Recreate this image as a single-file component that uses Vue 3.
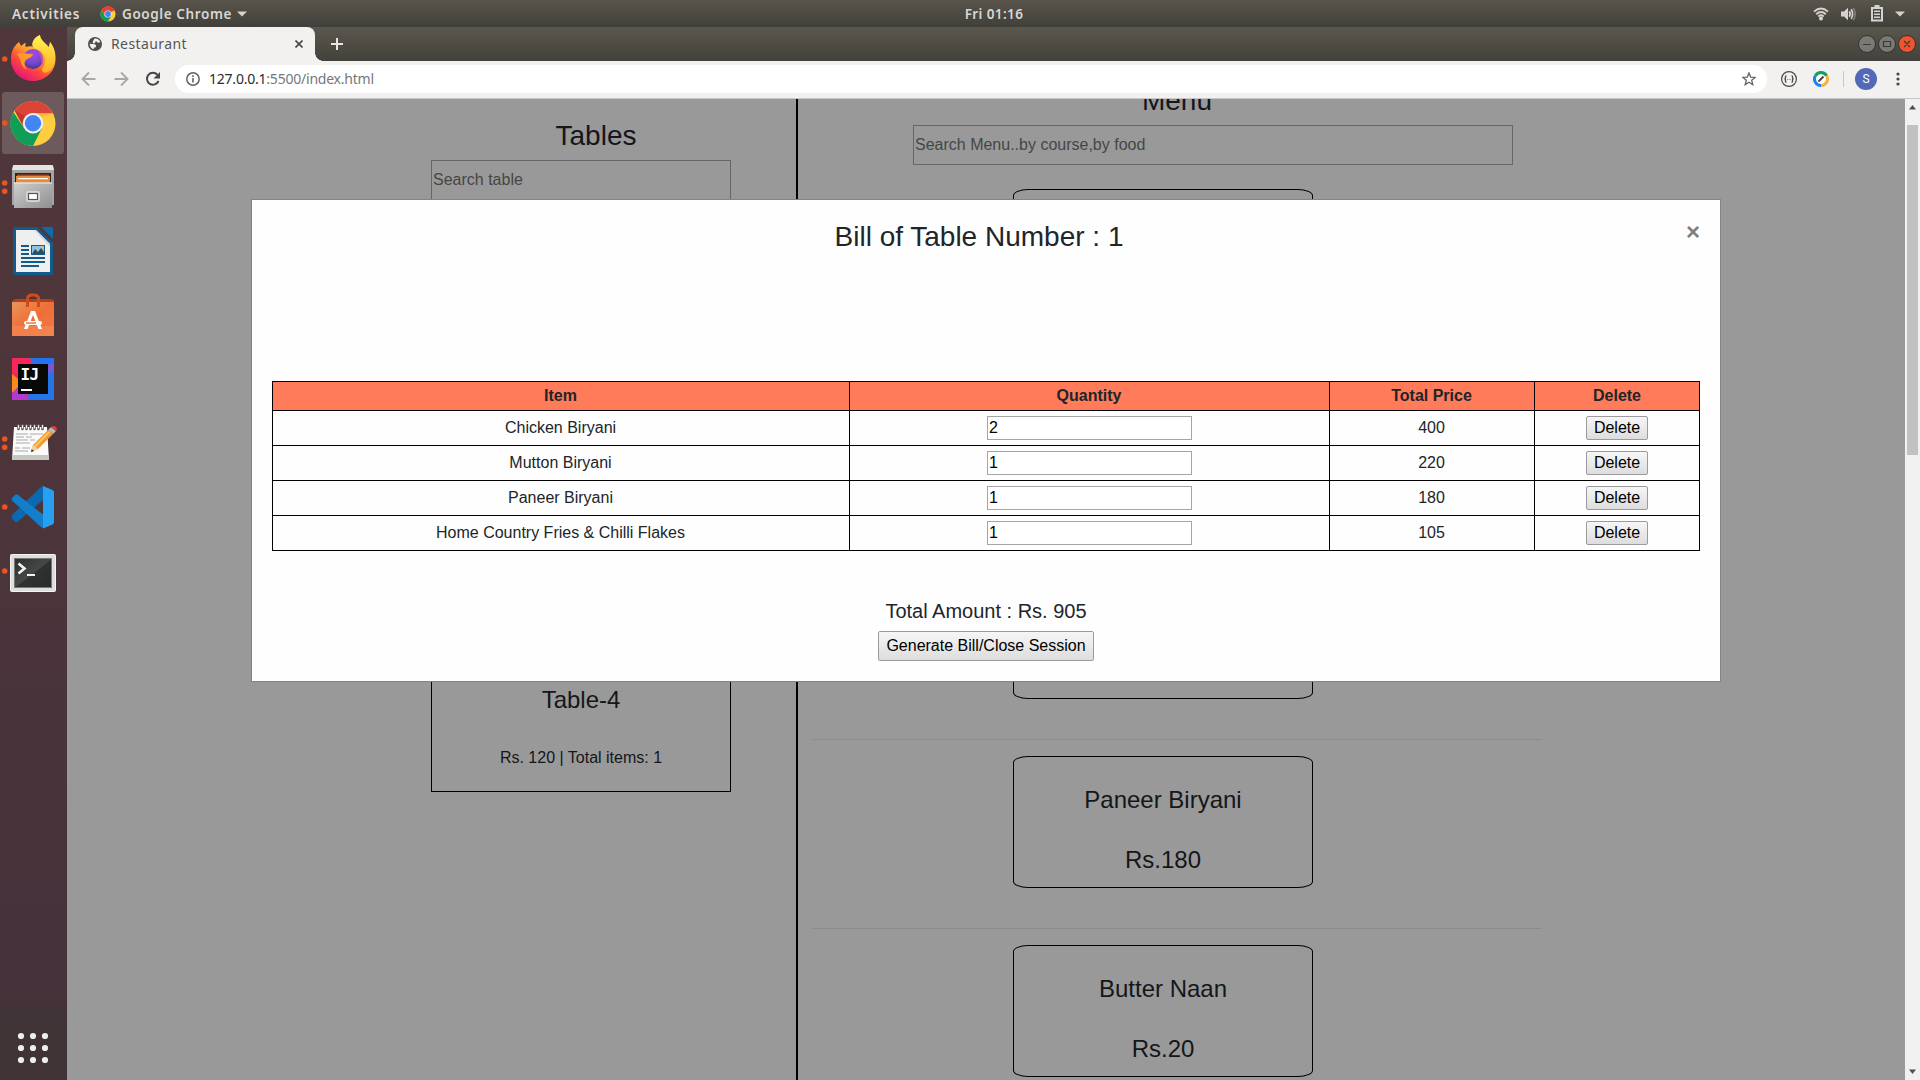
<script setup>
import { ref } from 'vue'

const orders = ref([
  { name: 'Chicken Biryani', qty: 2, price: 400 },
  { name: 'Mutton Biryani', qty: 1, price: 220 },
  { name: 'Paneer Biryani', qty: 1, price: 180 },
  { name: 'Home Country Fries & Chilli Flakes', qty: 1, price: 105 },
])
const menu = [
  { id: 1 },
  { id: 2 },
  { id: 3 },
  { id: 4, name: 'Paneer Biryani', price: 180 },
  { id: 5, name: 'Butter Naan', price: 20 },
]
</script>

<template>
  <div class="desktop">
    <header class="topbar">
      <div class="side">
        <span class="activities">Activities</span>
        <svg class="mini-chrome" width="16" height="16" viewBox="-8 -8 16 16">
          <circle r="7.6" fill="#ffcd40" />
          <path d="M0 0L-6.6-3.8A7.6 7.6 0 0 1 6.6-3.8z" fill="#db4437" />
          <path d="M0-3.8H6.6A7.6 7.6 0 0 0-6.6-3.8L-3.3 1.9z" fill="#db4437" />
          <path d="M-6.6-3.8A7.6 7.6 0 0 0 0 7.6L3.3 1.9L0 0L-3.3 1.9z" fill="#0f9d58" />
          <circle r="3.6" fill="#f1f1f1" /><circle r="2.9" fill="#4285f4" />
        </svg>
        <span class="appname">Google Chrome</span>
        <svg class="caret" width="10" height="6" viewBox="0 0 10 6"><path d="M0 .5H10L5 5.5z" fill="#d5d3cf" /></svg>
      </div>
      <span class="clock">Fri 01:16</span>
      <div class="side tray">
        <svg width="16" height="14" viewBox="0 0 16 14" fill="none" stroke="#d5d3cf" stroke-width="1.9">
          <path d="M1 4.6Q8-1.8 15 4.6M3.2 7.3Q8 2.9 12.8 7.3M5.3 9.4Q8 7.2 10.7 9.4" />
          <circle cx="8" cy="11.5" r="2" fill="#d5d3cf" stroke="none" />
        </svg>
        <svg class="vol" width="16" height="14" viewBox="0 0 16 14" fill="none" stroke="#d5d3cf" stroke-width="1.7">
          <path d="M0 4.5H3L7 .8V13.2L3 9.5H0z" fill="#d5d3cf" stroke="none" />
          <path d="M8.3 4.2Q10 7 8.3 9.8M10.2 2.3Q13 7 10.2 11.7" /><path d="M12.3.8Q16 7 12.3 13.2" stroke="#7c7973" />
        </svg>
        <svg class="bat" width="12" height="17" viewBox="0 0 12 17">
          <path d="M3.5 0h5v2H12V16.500H0V2H3.500z" fill="#d5d3cf" /><path d="M2 4h8v10.500H2z" fill="#4b4943" />
          <path d="M3 5.500h6v1.500H3zM3 8.500h6v1.500H3zM3 11.500h6V13H3z" fill="#d5d3cf" />
        </svg>
        <svg class="caret2" width="10" height="6" viewBox="0 0 10 6"><path d="M0 .5H10L5 5.500z" fill="#d5d3cf" /></svg>
      </div>
    </header>

    <div class="workspace">
      <nav class="dock">
        <div class="app">
          <svg width="67" height="64" viewBox="0 27 67 64">
            <defs>
              <linearGradient id="ff" x1=".85" y1=".1" x2=".3" y2="1"><stop offset="0" stop-color="#fff44f" /><stop offset=".4" stop-color="#ffa42c" /><stop offset=".68" stop-color="#ff4a3a" /><stop offset="1" stop-color="#e5127e" /></linearGradient>
              <radialGradient id="ffb" cx=".5" cy=".25" r=".8"><stop offset="0" stop-color="#a04bf0" /><stop offset=".6" stop-color="#7548c8" /><stop offset="1" stop-color="#39318f" /></radialGradient>
              <linearGradient id="ffy" x1="0" y1="0" x2="0" y2="1"><stop offset="0" stop-color="#fff44f" /><stop offset="1" stop-color="#ffae23" /></linearGradient>
            </defs>
            <circle cx="4.700" cy="59" r="2.800" fill="#e95420" />
            <path d="M11 59C11 51 14 46 19 42L21 46L25.500 42.500V47C29 46 32 46 33 47C31 42 35 37 40 35C40 39 43 41 46 44L49 47L50 42C54 47 56 53 55.500 60C55 72 45 81 33 81S11 72 11 59z" fill="url(#ff)" />
            <path d="M33 47C31 42 35 37 40 35C40 40 45 42 49 49L50 42C55 48 57 60 52 68C48 74 42 74 42 69C48 62 46 53 39 50z" fill="url(#ffy)" />
            <circle cx="33" cy="59" r="10" fill="url(#ffb)" />
            <path d="M17 54C20 52 24 54 33 54C32 58 28 58 26 60C24 62 24 66 27 70C20 67 22 60 17 54z" fill="#ff9a2e" />
            <path d="M37 50C44 52 45 60 42 67C41 58 40 54 37 50z" fill="#e84ba8" opacity=".65" />
          </svg>
        </div>
        <div class="app active">
          <svg width="67" height="64" viewBox="0 91 67 64">
            <circle cx="4.700" cy="123" r="2.800" fill="#e95420" />
            <circle cx="33" cy="123.500" r="22.500" fill="#ffcd40" />
            <path d="M13.500 112.200A22.500 22.500 0 0 0 33 146L42 128L33 123.500L24 128z" fill="#0f9d58" />
            <path d="M53 113.200A22.500 22.500 0 0 0 14.600 110.500L24 128L33 123.500V113.200z" fill="#db4437" />
            <path d="M14.600 110.500L24 127.500L25 116z" fill="#a83228" opacity=".6" />
            <path d="M33 113.200H53L42 117z" fill="#e6ad2c" opacity=".5" />
            <circle cx="33" cy="123.300" r="10.300" fill="#f1f1f1" /><circle cx="33" cy="123.300" r="8.200" fill="#4285f4" />
          </svg>
        </div>
        <div class="app">
          <svg width="67" height="64" viewBox="0 155 67 64">
            <defs><linearGradient id="fl" x1="0" y1="0" x2="1" y2="1"><stop offset="0" stop-color="#cfcfcf" /><stop offset="1" stop-color="#8f8f8f" /></linearGradient></defs>
            <g fill="#e95420"><circle cx="4.700" cy="183" r="2.800" /><circle cx="4.700" cy="191.300" r="2.800" /></g>
            <path d="M13 166Q13 165 14 165H52Q53 165 53 166L54 170V205H12V170z" fill="#a5a5a5" />
            <path d="M13 166Q13 165 14 165H52Q53 165 53 166L54 170H12z" fill="#e4e4e4" />
            <path d="M15 173H51V183H15z" fill="#2a2523" /><path d="M17 174.500H49V176H17z" fill="#c34113" /><path d="M16 176H50V183H16z" fill="#e88b38" /><path d="M18 178H48V179.300H18z" fill="#fff" />
            <path d="M14 182.500H52V208H14z" fill="url(#fl)" /><path d="M14 182.500H52V183.500H14z" fill="#efefef" />
            <rect x="26" y="191" width="14" height="11" rx="2" fill="#d6d6d6" /><rect x="28.500" y="193.500" width="9" height="6" fill="#fff" stroke="#555" stroke-width="1.200" />
          </svg>
        </div>
        <div class="app">
          <svg width="67" height="64" viewBox="0 219 67 64">
            <path d="M15 227H37L53 243V273Q53 275 51 275H15Q13 275 13 273V229Q13 227 15 227z" fill="#135b8a" />
            <path d="M41 227H52Q53 227 53 228V239z" fill="#0f6aa8" />
            <path d="M16 230H36L50 244V272H16z" fill="#efefef" /><path d="M36 230L50 244V247L34 230z" fill="#d0d8de" />
            <path d="M21 245H29V247H21zM21 249H29V251H21zM21 253H29V255H21zM21 257H45V259H21zM21 261H45V263H21zM21 265H39V267H21z" fill="#135b8a" />
            <path d="M31 245H45V255H31z" fill="#135b8a" /><path d="M32 246H44V254H32z" fill="#8fc1e6" /><path d="M32 254L35 249L38 252L41 248L44 252V254z" fill="#3b4a4f" /><circle cx="42.500" cy="247" r="1.300" fill="#f5c33b" />
          </svg>
        </div>
        <div class="app">
          <svg width="67" height="64" viewBox="0 283 67 64">
            <defs><linearGradient id="sw" x1="0" y1="0" x2="1" y2="1"><stop offset="0" stop-color="#e9955a" /><stop offset=".5" stop-color="#ee6e37" /><stop offset="1" stop-color="#f27b47" /></linearGradient></defs>
            <path d="M13 300L16 299H50L54 300V305H12z" fill="#b4401b" /><path d="M12 302H54V336H12z" fill="url(#sw)" /><path d="M12 326H54V336H12z" fill="#f58a58" opacity=".6" />
            <path d="M27.500 307V299Q27.500 295 32 295H34Q38.500 295 38.500 299V307" fill="none" stroke="#d14a1c" stroke-width="3" />
            <path d="M31 311H35L42 329H38.500L33 315L27.500 329H24z" fill="#fff" /><rect x="24" y="321" width="18" height="4" rx="2" fill="#fff" /><path d="M26 322.300H36V323.700H26z" fill="#ee6e37" />
          </svg>
        </div>
        <div class="app">
          <svg width="67" height="64" viewBox="0 347 67 64">
            <path d="M12 358H54V400H12z" fill="#2476e8" /><path d="M12 358H30L40 379L24 400H12z" fill="#f5285c" /><path d="M12 374L18 379V388L12 393z" fill="#fa8a1f" /><path d="M12 393L19 386L30 400H12z" fill="#b13ad0" /><path d="M30 358H36L54 372V358z" fill="#2573f0" /><path d="M31 358L35 364H54V370L48 374V364H33z" fill="#7a55d6" />
            <path d="M18 364H48V394H18z" fill="#080808" /><path d="M21 389H32V391H21z" fill="#fff" />
            <text x="20.500" y="380" font-family="'DejaVu Sans Mono', monospace" font-weight="700" font-size="16" letter-spacing="-.6" fill="#fff">IJ</text>
          </svg>
        </div>
        <div class="app">
          <svg width="67" height="64" viewBox="0 411 67 64">
            <g fill="#e95420"><circle cx="4.700" cy="439" r="2.800" /><circle cx="4.700" cy="447.300" r="2.800" /></g>
            <path d="M14 427H47L49 460H12z" fill="#fafafa" /><path d="M12.300 455H48.700L49 460H12z" fill="#c4c8c0" />
            <path d="M16 434H28M30 434H43M16 437H24M26 437H32M16 440H28M30 440H35M16 443H30M15 448H20M22 448H30M15 451H28" stroke="#a9a9a9" fill="none" />
            <path d="M18.500 425V429M22.500 425V429M26.500 425V429M30.500 425V429M34.500 425V429M38.500 425V429M42.500 425V429" stroke="#555" stroke-width="2.600" stroke-linecap="round" /><path d="M18.500 425V428.500M22.500 425V428.500M26.500 425V428.500M30.500 425V428.500M34.500 425V428.500M38.500 425V428.500M42.500 425V428.500" stroke="#eee" stroke-width="1.300" />
            <path d="M31 452L33 445L48 430L53 434L38 449z" fill="#f29a2e" /><path d="M34 446L49 431L50.500 432L36 447z" fill="#ffc56e" /><path d="M31 452L33 445L38 449z" fill="#f1d4a2" /><path d="M31 452L31.700 449.300L34 451z" fill="#222" /><path d="M48 430L51 427L56 431L53 434z" fill="#b9b9b9" /><path d="M51 427Q54 425 56 427T56 431z" fill="#e23b3b" />
          </svg>
        </div>
        <div class="app">
          <svg width="67" height="64" viewBox="0 475 67 64">
            <circle cx="4.700" cy="507" r="2.800" fill="#e95420" />
            <path d="M12 518.500L15.500 522Q17 522.500 18 521.500L43 500V486.500Q42 486 41 487L12 515Q11.600 517 12 518.500z" fill="#0b69b1" /><path d="M12 498L15.500 494.500Q17 494 18 495L43 514.500V527.500Q42 528 41 527L12 500.500Q11.600 499 12 498z" fill="#137fca" /><path d="M43 486L52.500 490Q54 491 54 492V522Q54 523.500 52.500 524.500L43 528.500z" fill="#27a0f2" />
          </svg>
        </div>
        <div class="app">
          <svg width="67" height="64" viewBox="0 539 67 64">
            <defs><linearGradient id="tm" x1="0" y1="0" x2="1" y2="1"><stop offset="0" stop-color="#2c2f2d" /><stop offset=".5" stop-color="#454846" /><stop offset=".52" stop-color="#2f3230" /><stop offset="1" stop-color="#292b2a" /></linearGradient></defs>
            <circle cx="4.700" cy="571" r="2.800" fill="#e95420" />
            <rect x="10.500" y="554.500" width="45" height="37" rx="1" fill="#dedede" stroke="#f3f3f3" /><path d="M14 558H52V588H14z" fill="#767876" /><path d="M15 559H51V587H15z" fill="url(#tm)" />
            <path d="M18.500 563.500L24.500 568.500L18.500 573.500" fill="none" stroke="#f2f2f2" stroke-width="2.600" /><path d="M27 574H35V576H27z" fill="#f2f2f2" />
          </svg>
        </div>
        <svg class="grid-btn" width="67" height="64" viewBox="0 1016 67 64" fill="#eeeeec">
          <g v-for="y in [1036, 1048, 1060]" :key="y"><circle v-for="x in [21, 33, 45]" :key="x" :cx="x" :cy="y" r="3.100" /></g>
        </svg>
      </nav>

      <main class="browser">
        <div class="tabstrip">
          <div class="tab">
            <svg width="14" height="14" viewBox="0 0 14 14"><circle cx="7" cy="7" r="7" fill="#4d4d4f" /><path d="M6.300 1.700C9 1.200 11.500 2.600 12.300 5.200L9.800 5.800L8.800 4.600H7.400L7 6.200H4.600L5.200 3.800z" fill="#f2f1f0" /><path d="M1.600 6.800L6.800 7.200L8.200 8.600L7.600 10.400H6L5.600 12.300C3.200 11.500 1.700 9.400 1.600 6.800z" fill="#f2f1f0" /></svg>
            <span class="tabname">Restaurant</span>
            <svg width="8" height="8" viewBox="0 0 8 8"><path d="M.5.5L7.500 7.500M7.500.5L.5 7.500" stroke="#45454a" stroke-width="1.600" /></svg>
          </div>
          <svg class="plus" width="12" height="12" viewBox="0 0 12 12"><path d="M6 0V12M0 6H12" stroke="#e8e6e3" stroke-width="2" /></svg>
          <div class="winbtns">
            <svg width="60" height="20" viewBox="1857 34 60 20">
              <g fill="#7b7973" stroke="#33322d"><circle cx="1867" cy="44" r="8.500" /><circle cx="1887" cy="44" r="8.500" /><circle cx="1907" cy="44" r="8.500" fill="#ee5430" /></g>
              <path d="M1863 44.500H1871M1883.500 41.500H1890.500V46.500H1883.500zM1904 41L1910 47M1910 41L1904 47" fill="none" stroke="#3b3a36" stroke-width="1.200" />
            </svg>
          </div>
        </div>
        <div class="toolbar">
          <svg class="nav" width="66" height="16" viewBox="0 0 66 16" fill="none">
            <path d="M14.500 8H1.500M8 1.500L1.500 8L8 14.500M33.500 8H46.500M40 1.500L46.500 8L40 14.500" stroke="#a9a8a7" stroke-width="1.900" />
          </svg>
          <svg class="reload" width="16" height="16" viewBox="0 0 16 16"><path d="M13.500 10A6 6 0 1 1 12.500 3.800" fill="none" stroke="#47474a" stroke-width="2" /><path d="M15 1V7.500H8.500z" fill="#47474a" /></svg>
          <div class="omnibox">
            <svg width="14" height="14" viewBox="0 0 14 14"><circle cx="7" cy="7" r="6.200" fill="none" stroke="#5f6368" stroke-width="1.500" /><path d="M6.200 6H7.800V10.600H6.200zM6.200 3.300H7.800V4.900H6.200z" fill="#5f6368" /></svg>
            <span class="url"><b>127.0.0.1</b>:5500/index.html</span>
            <svg class="star" width="14" height="14" viewBox="0 0 14 14"><path d="M7 1L8.700 5.100L13.200 5.400L9.700 8.300L10.800 12.700L7 10.300L3.200 12.700L4.300 8.300L.8 5.400L5.300 5.100z" fill="none" stroke="#5f6368" stroke-width="1.300" /></svg>
          </div>
          <svg class="ext1" width="16" height="16" viewBox="0 0 16 16" fill="none" stroke="#4a4a4a"><circle cx="8" cy="8" r="7.400" stroke-width="1.200" /><path d="M5.500 4.800Q4.300 4.800 4.500 6.300T3.500 8Q4.700 8 4.500 9.700T5.500 11.200M10.500 4.800Q11.700 4.800 11.500 6.300T12.500 8Q11.300 8 11.500 9.700T10.500 11.200" stroke-width="1.300" /><path d="M6 8.500H10" stroke="#999" stroke-dasharray="1 .6" /></svg>
          <svg class="ext2" width="16" height="16" viewBox="-8 -8 16 16" fill="none" stroke-width="3"><circle r="5" fill="#fff" /><path d="M-5.630-3.250A6.500 6.500 0 0 1 5.630-3.250" stroke="#12a05c" /><path d="M5.630-3.250A6.500 6.500 0 0 1 0 6.500" stroke="#fbb034" /><path d="M0 6.500A6.500 6.500 0 0 1-5.630-3.250" stroke="#1a82f7" /><path d="M-2.500 2.500L2.500-2.500" stroke="#444" stroke-width="2" /></svg>
          <i class="sep"></i>
          <span class="avatar">S</span>
          <svg class="more" width="4" height="14" viewBox="0 0 4 14" fill="#47474a"><circle cx="2" cy="2" r="1.600" /><circle cx="2" cy="7" r="1.600" /><circle cx="2" cy="12" r="1.600" /></svg>
        </div>

        <div class="viewport">
          <div class="page">
            <section class="tables">
              <h3>Tables</h3>
              <input class="search" placeholder="Search table" />
              <div class="tcard"><h4>Table-4</h4><p>Rs. 120 | Total items: 1</p></div>
            </section>
            <section class="menu">
              <h3>Menu</h3>
              <input class="search wide" placeholder="Search Menu..by course,by food" />
              <div class="items">
                <template v-for="m in menu" :key="m.id">
                  <div class="mcard"><template v-if="m.name"><h4>{{ m.name }}</h4><h4>Rs.{{ m.price }}</h4></template></div>
                  <hr />
                </template>
              </div>
            </section>

            <div class="modal">
              <div class="mhead"><h3>Bill of Table Number : 1</h3><span class="close">×</span></div>
              <table>
                <colgroup><col class="c1" /><col class="c2" /><col class="c3" /><col class="c4" /></colgroup>
                <thead><tr><th>Item</th><th>Quantity</th><th>Total Price</th><th>Delete</th></tr></thead>
                <tbody>
                  <tr v-for="o in orders" :key="o.name">
                    <td>{{ o.name }}</td>
                    <td><input v-model="o.qty" class="qty" /></td>
                    <td>{{ o.price }}</td>
                    <td><button class="del">Delete</button></td>
                  </tr>
                </tbody>
              </table>
              <h5>Total Amount : Rs. 905</h5>
              <button class="gen">Generate Bill/Close Session</button>
            </div>
          </div>
          <div class="scrollbar">
            <svg width="15" height="26" viewBox="0 0 15 26"><path d="M4 10.500L7.500 6L11 10.500z" fill="#505050" /></svg>
            <div class="thumb"></div>
            <svg class="down" width="15" height="17" viewBox="0 0 15 17"><path d="M4 6.500H11L7.500 11z" fill="#505050" /></svg>
          </div>
        </div>
      </main>
    </div>
  </div>
</template>

<style>
body { margin: 0; overflow: hidden; }
</style>

<style scoped>
* { box-sizing: border-box; }
svg { display: block; flex: none; }
h3, h4, h5, p { margin: 0; font-weight: 400; }
.desktop { width: 1920px; height: 1080px; overflow: hidden; display: flex; flex-direction: column; font-family: "Noto Sans", "Open Sans", sans-serif; }
.topbar { height: 27px; flex: none; display: flex; align-items: center; background: linear-gradient(#59554c, #403f3a); color: #dad7d2; font-size: 13.500px; font-weight: 600; white-space: nowrap; }
.side { width: 952px; flex: none; display: flex; align-items: center; }
.activities { width: 68px; margin-left: 12px; letter-spacing: .8px; }
.mini-chrome { margin-left: 20px; }
.appname { width: 109px; margin-left: 6px; letter-spacing: .6px; }
.caret { margin-left: 6px; }
.clock { width: 84px; flex: none; text-align: center; letter-spacing: .4px; }
.tray { width: 884px; justify-content: flex-end; padding-right: 15px; }
.vol { margin-left: 12px; }
.bat { margin-left: 14px; }
.caret2 { margin-left: 12px; }
.workspace { flex: 1; display: flex; min-height: 0; }
.dock { width: 67px; flex: none; display: flex; flex-direction: column; background: linear-gradient(#50373b, #4b343a 55%, #45323a 92%, #3f3336 94%); }
.app { height: 64px; flex: none; }
.active { position: relative; }
.active::before { content: ""; position: absolute; left: 2px; top: 1px; width: 62px; height: 62px; border-radius: 3px; background: #6d5a5d; }
.active svg { position: relative; }
.grid-btn { margin-top: auto; }
.browser { flex: 1; min-width: 0; display: flex; flex-direction: column; }
.tabstrip { height: 34px; flex: none; display: flex; align-items: center; background: linear-gradient(#5b574e, #42413b); }
.tab { position: relative; width: 240px; height: 34px; margin-left: 8px; padding: 0 12px 0 13px; display: flex; align-items: center; border-radius: 8px 8px 0 0; background: #f2f1f0; color: #55555a; font-size: 14px; }
.tab::before, .tab::after { content: ""; position: absolute; bottom: 0; width: 8px; height: 8px; }
.tab::before { left: -8px; background: radial-gradient(circle at 0 0, transparent 7.500px, #f2f1f0 8px); }
.tab::after { right: -8px; background: radial-gradient(circle at 100% 0, transparent 7.500px, #f2f1f0 8px); }
.tabname { flex: 1; margin-left: 9px; padding-bottom: 2px; letter-spacing: .4px; }
.plus { margin-left: 16px; }
.winbtns { margin-left: auto; padding-right: 3px; }
.toolbar { height: 38px; flex: none; display: flex; align-items: center; padding-bottom: 1px; background: #f2f1f0; border-bottom: 1px solid #c6c6c6; }
.nav { margin-left: 14px; }
.reload { margin-left: -2px; }
.omnibox { width: 1592px; height: 28px; margin-left: 14px; padding: 0 11px; display: flex; align-items: center; border-radius: 14px; background: #fff; color: #75777b; font-size: 14px; }
.url { margin-left: 9px; padding-bottom: 1px; letter-spacing: -.22px; }
.url b { font-weight: 400; color: #2b2b2e; }
.star { margin-left: auto; }
.ext1 { margin-left: 14px; }
.ext2 { margin-left: 16px; }
.sep { width: 1px; height: 16px; margin-left: 14px; background: #c9c8c7; }
.avatar { width: 22px; height: 22px; margin-left: 11px; border-radius: 50%; background: #5468b8; color: #fff; font: 12px/22px Roboto, sans-serif; text-align: center; }
.more { margin-left: 19px; }
.viewport { flex: 1; display: flex; min-height: 0; }
.page { position: relative; width: 1838px; overflow: hidden; display: flex; background: #999; color: #141619; font-family: "Liberation Sans", Arial, sans-serif; font-size: 16px; line-height: 24px; }
.tables { width: 731px; flex: none; border-right: 2px solid #000; padding: 20px 0 0 364px; }
h3 { font-size: 28px; line-height: 34px; }
h4 { font-size: 24px; line-height: 29px; }
.tables h3 { width: 330px; text-align: center; }
.search { display: block; width: 300px; height: 40px; margin: 7px 0 0; padding: 2px 1px; border: 1px solid #666; border-radius: 0; background: #999; font: 16px "Liberation Sans", Arial, sans-serif; outline: 0; }
.search::placeholder { color: #464646; opacity: 1; }
.tcard { width: 300px; height: 135px; margin-top: 457px; padding-top: 27px; border: 1px solid #000; text-align: center; }
.tcard p { margin-top: 32px; }
.menu { padding-left: 15px; margin-top: -15px; text-align: center; width: 743px; }
.search.wide { width: 600px; margin-left: 100px; }
.items { display: flex; flex-direction: column; padding-top: 24px; }
.mcard { width: 300px; height: 132px; flex: none; margin-left: 200px; padding-top: 28px; border: 1px solid #000; border-radius: 5%; }
.mcard h4 + h4 { margin-top: 31px; }
hr { width: 728px; height: 1px; margin: 40px 0 16px; border: 0; background: #8a8a8a; flex: none; }
.modal { position: absolute; left: 184px; top: 100px; width: 1470px; height: 483px; padding: 20px; display: flex; flex-direction: column; align-items: center; border: 1px solid #848484; background: #fefefe; color: #212529; }
.mhead { width: 1428px; height: 161px; display: flex; }
.mhead h3 { flex: 1; text-align: center; line-height: 34px; }
.close { width: 14px; text-align: center; font-size: 24px; line-height: 24px; font-weight: 700; color: #7f7f7f; }
table { width: 1428px; flex: none; table-layout: fixed; border-collapse: separate; border-spacing: 0; border: solid #000; border-width: 1px 0 0 1px; text-align: center; }
.c1 { width: 577px; } .c2 { width: 480px; } .c3 { width: 205px; } .c4 { width: 165px; }
th, td { padding: 0; border: solid #000; border-width: 0 1px 1px 0; }
th:first-child, td:first-child, th:nth-child(2), th:nth-child(3), td:nth-child(3) { padding-right: 1px; }
th { height: 29px; background: #ff7b59; line-height: 28px; }
td { height: 35px; line-height: 34px; }
td input, td button { display: block; margin: 0 auto; }
.qty { width: 205px; height: 24px; padding: 2px 1px; border: 1px solid #a5a5a5; background: #fff; color: #000; font: 16px "Liberation Sans", Arial, sans-serif; }
button { padding: 0; border: 1px solid #9b9b9b; border-radius: 2px; background: linear-gradient(#f6f6f6, #dddddd); color: #000; font: 16px/20px "Liberation Sans", Arial, sans-serif; }
.del { width: 62px; height: 24px; }
.gen { width: 216px; height: 30px; flex: none; margin-top: 8px; line-height: 26px; }
h5 { margin-top: 48px; font-size: 20px; line-height: 24px; }
.scrollbar { width: 15px; display: flex; flex-direction: column; background: #f1f1f1; }
.thumb { width: 11px; height: 330px; margin-left: 2px; background: #c1c1c1; }
.down { margin-top: auto; }
</style>
